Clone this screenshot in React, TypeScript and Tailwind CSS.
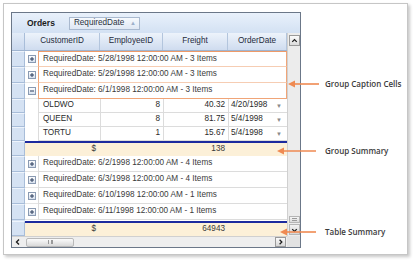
import clsx from "clsx";

const captionsTop = [
  "RequiredDate: 5/28/1998 12:00:00 AM - 3 Items",
  "RequiredDate: 5/29/1998 12:00:00 AM - 3 Items",
  "RequiredDate: 6/1/1998 12:00:00 AM - 3 Items",
];

const orders = [
  { customer: "OLDWO", employee: 8, freight: "40.32", date: "4/20/1998" },
  { customer: "QUEEN", employee: 8, freight: "81.75", date: "5/4/1998" },
  { customer: "TORTU", employee: 1, freight: "15.67", date: "5/4/1998" },
];

const captionsBottom = [
  "RequiredDate: 6/2/1998 12:00:00 AM - 4 Items",
  "RequiredDate: 6/3/1998 12:00:00 AM - 4 Items",
  "RequiredDate: 6/10/1998 12:00:00 AM - 1 Items",
  "RequiredDate: 6/11/1998 12:00:00 AM - 1 Items",
];

function Indicator() {
  return (
    <div className="h-full w-[13px] shrink-0 border-r border-b border-[#a8bdd9] border-t border-t-[#eef4fc] bg-[#d5e2f3]" />
  );
}

function Expander({ expanded }: { expanded?: boolean }) {
  return (
    <svg width="8" height="8" viewBox="0 0 8 8">
      <defs>
        <linearGradient id="exp" x1="0" y1="0" x2="0" y2="1">
          <stop offset="0" stopColor="#ffffff" />
          <stop offset="1" stopColor="#d4deec" />
        </linearGradient>
      </defs>
      <rect x="0.5" y="0.5" width="7" height="7" fill="url(#exp)" stroke="#8a9ab2" />
      <path d="M2 4h4" stroke="#2b3c5c" strokeWidth="1" />
      {!expanded && <path d="M4 2v4" stroke="#2b3c5c" strokeWidth="1" />}
    </svg>
  );
}

function CaptionRow({
  text,
  expanded,
  hl,
  first,
  last,
}: {
  text: string;
  expanded?: boolean;
  hl?: boolean;
  first?: boolean;
  last?: boolean;
}) {
  return (
    <div className="flex h-4">
      <Indicator />
      <div className="flex w-[13px] shrink-0 items-center justify-center border-b border-[#e4e4e4] bg-white">
        <Expander expanded={expanded} />
      </div>
      <div
        className={clsx(
          "flex w-[249px] items-center border-b border-l pl-[4px] text-[#3a3a3a]",
          hl ? "border-r border-[#f0a578]" : "border-[#dcdcdc]",
          hl && !last && "border-b-[#f6cdb3]",
          first && "border-t border-t-[#ee9a68]",
        )}
      >
        {text}
      </div>
    </div>
  );
}

function DataRow({ o }: { o: (typeof orders)[number] }) {
  return (
    <div className="flex h-[14px]">
      <Indicator />
      <div className="w-[13px] shrink-0 bg-white" />
      <div className="flex w-[62px] items-center border-b border-l border-[#dcdcdc] pl-[4px] text-[#2a2a2a]">
        {o.customer}
      </div>
      <div className="flex w-[63px] items-center justify-end border-b border-l border-[#dcdcdc] pr-[3px] text-[#2a2a2a]">
        {o.employee}
      </div>
      <div className="flex w-[65px] items-center justify-end border-b border-l border-[#dcdcdc] pr-[3px] text-[#2a2a2a]">
        {o.freight}
      </div>
      <div className="flex w-[59px] items-center justify-between border-b border-l border-[#dcdcdc] pl-[2px] pr-[5px] text-[#2a2a2a]">
        <span>{o.date}</span>
        <span className="text-[6px] text-[#8a8a8a]">▼</span>
      </div>
    </div>
  );
}

function SummaryRow({ total }: { total: string }) {
  return (
    <div className="flex h-[15px]">
      <Indicator />
      <div className="flex w-[262px] flex-col">
        <div className="h-[2px] bg-[#1c2a9e]" />
        <div className="flex flex-1 bg-[#fcf0d8] text-[#3a3a3a]">
          <div className="w-[13px]" />
          <div className="flex w-[62px] items-center justify-end pr-[4px]">$</div>
          <div className="w-[63px]" />
          <div className="flex w-[65px] items-center justify-end pr-[3px]">{total}</div>
        </div>
      </div>
    </div>
  );
}

function HeaderCell({ label, w }: { label: string; w: string }) {
  return (
    <div
      className={clsx(
        "flex items-center justify-center border-r border-[#b3c5dd] text-[#1f2b3c]",
        w,
      )}
    >
      {label}
    </div>
  );
}

function Chevron({ dir }: { dir: "up" | "down" | "left" | "right" }) {
  const d = {
    up: "M2.5 6L5 3.5L7.5 6",
    down: "M2.5 4L5 6.5L7.5 4",
    left: "M6 2.5L3.5 5L6 7.5",
    right: "M4 2.5L6.5 5L4 7.5",
  }[dir];
  return (
    <svg width="10" height="10" viewBox="0 0 10 10">
      <path d={d} fill="none" stroke="#1e1e1e" strokeWidth="1.4" />
    </svg>
  );
}

function Callout({ x, y, len, label }: { x: number; y: number; len: number; label: string }) {
  return (
    <div className="absolute flex items-center" style={{ left: x, top: y - 6 }}>
      <svg width={len} height="12" viewBox={`0 0 ${len} 12`}>
        <path d={`M0 6L7 2.5V9.5Z`} fill="#ef8a52" />
        <path d={`M6 6H${len}`} stroke="#ef8a52" strokeWidth="1.6" />
      </svg>
      <span
        className="whitespace-nowrap text-[8px] font-semibold text-[#3b3b3b] font-['Open_Sans',sans-serif]"
        style={{ marginLeft: 325 - x - len }}
      >
        {label}
      </span>
    </div>
  );
}

export default function App() {
  return (
    <div className="relative h-[260px] w-[413px] bg-white font-['Liberation_Sans',Arial,sans-serif] text-[8.2px] leading-none">
      <div className="ml-[3px] mt-[3px] h-[252px] w-[405px] border border-[#c6c6c6] bg-white pl-[7px] pt-[8px] shadow-[2px_2px_3px_rgba(0,0,0,0.22)]">
        <div className="flex h-[236px] w-[290px] flex-col border border-[#6b7788] bg-white">
          {/* group by panel */}
          <div className="flex h-[20px] shrink-0 items-center bg-gradient-to-b from-[#e9f1fb] to-[#d3e1f3] pl-[15px]">
            <span className="text-[8.5px] font-bold text-[#1b1b1b]">Orders</span>
            <div className="ml-[14px] flex h-[13px] w-[71px] items-center justify-between border border-[#a9b9cf] bg-gradient-to-b from-[#f6f9fd] to-[#dfe8f4] pl-[4px] pr-[3px] text-[#2b3240]">
              <span>RequiredDate</span>
              <span className="text-[6px] text-[#9db0cb]">▲</span>
            </div>
          </div>

          <div className="flex">
            <div className="flex w-[275px] flex-col">
              {/* header */}
              <div className="flex h-[18px] border-b border-[#9fb4d0] bg-gradient-to-b from-[#edf3fb] to-[#cfdcef]">
                <div className="w-[13px] border-r border-[#a8bdd9] bg-gradient-to-b from-[#e3ecf8] to-[#c9d8ee]" />
                <HeaderCell label="CustomerID" w="w-[75px]" />
                <HeaderCell label="EmployeeID" w="w-[63px]" />
                <HeaderCell label="Freight" w="w-[65px]" />
                <HeaderCell label="OrderDate" w="w-[59px]" />
              </div>

              {captionsTop.map((c, i) => (
                <CaptionRow key={c} text={c} hl first={i === 0} last={i === 2} expanded={i === 2} />
              ))}
              {orders.map((o) => (
                <DataRow key={o.customer} o={o} />
              ))}
              <SummaryRow total="138" />
              {captionsBottom.map((c) => (
                <CaptionRow key={c} text={c} />
              ))}
              <div className="flex h-[1px]">
                <div className="w-[13px] bg-[#d5e2f3]" />
              </div>
              <SummaryRow total="64943" />
            </div>

            {/* vertical scrollbar */}
            <div className="flex w-[13px] flex-col items-center border-l border-[#d0d0d0] bg-[#ececec] pt-[2px] pb-[1px]">
              <div className="flex h-[11px] w-[11px] items-center justify-center border border-[#9a9a9a] bg-gradient-to-b from-[#fbfbfb] to-[#dcdcdc]">
                <Chevron dir="up" />
              </div>
              <div className="flex-1" />
              <div className="flex h-[7px] w-[11px] items-center justify-center border border-[#b5b5b5] bg-gradient-to-b from-[#f6f6f6] to-[#dadada]">
                <div className="h-[3px] w-[5px] border-y border-[#9a9a9a]" />
              </div>
              <div className="mt-[1px] flex h-[11px] w-[11px] items-center justify-center border border-[#b5b5b5] bg-gradient-to-b from-[#f2f2f2] to-[#d6d6d6]">
                <Chevron dir="down" />
              </div>
            </div>
          </div>

          {/* horizontal scrollbar */}
          <div className="flex h-[11px] flex-1">
            <div className="flex w-[275px] items-center border-t border-[#d0d0d0] bg-[#eeeeee]">
              <div className="flex h-[10px] w-[12px] items-center justify-center">
                <Chevron dir="left" />
              </div>
              <div className="ml-[2px] flex h-[9px] w-[48px] items-center justify-center rounded-[2px] border border-[#b9b9b9] bg-gradient-to-b from-[#fbfbfb] to-[#d9d9d9]">
                <div className="h-[4px] w-[5px] border-x border-[#9a9a9a] bg-[linear-gradient(90deg,transparent_2px,#9a9a9a_2px,#9a9a9a_3px,transparent_3px)]" />
              </div>
              <div className="flex-1" />
              <div className="mr-[1px] flex h-[10px] w-[11px] items-center justify-center border border-[#9a9a9a] bg-gradient-to-b from-[#fbfbfb] to-[#d6d6d6]">
                <Chevron dir="right" />
              </div>
            </div>
            <div className="w-[13px] bg-[#e2e2e2]" />
          </div>
        </div>
      </div>

      <Callout x={288} y={81} len={31} label="Group Caption Cells" />
      <Callout x={277} y={148} len={39} label="Group Summary" />
      <Callout x={280} y={229} len={36} label="Table Summary" />
    </div>
  );
}
